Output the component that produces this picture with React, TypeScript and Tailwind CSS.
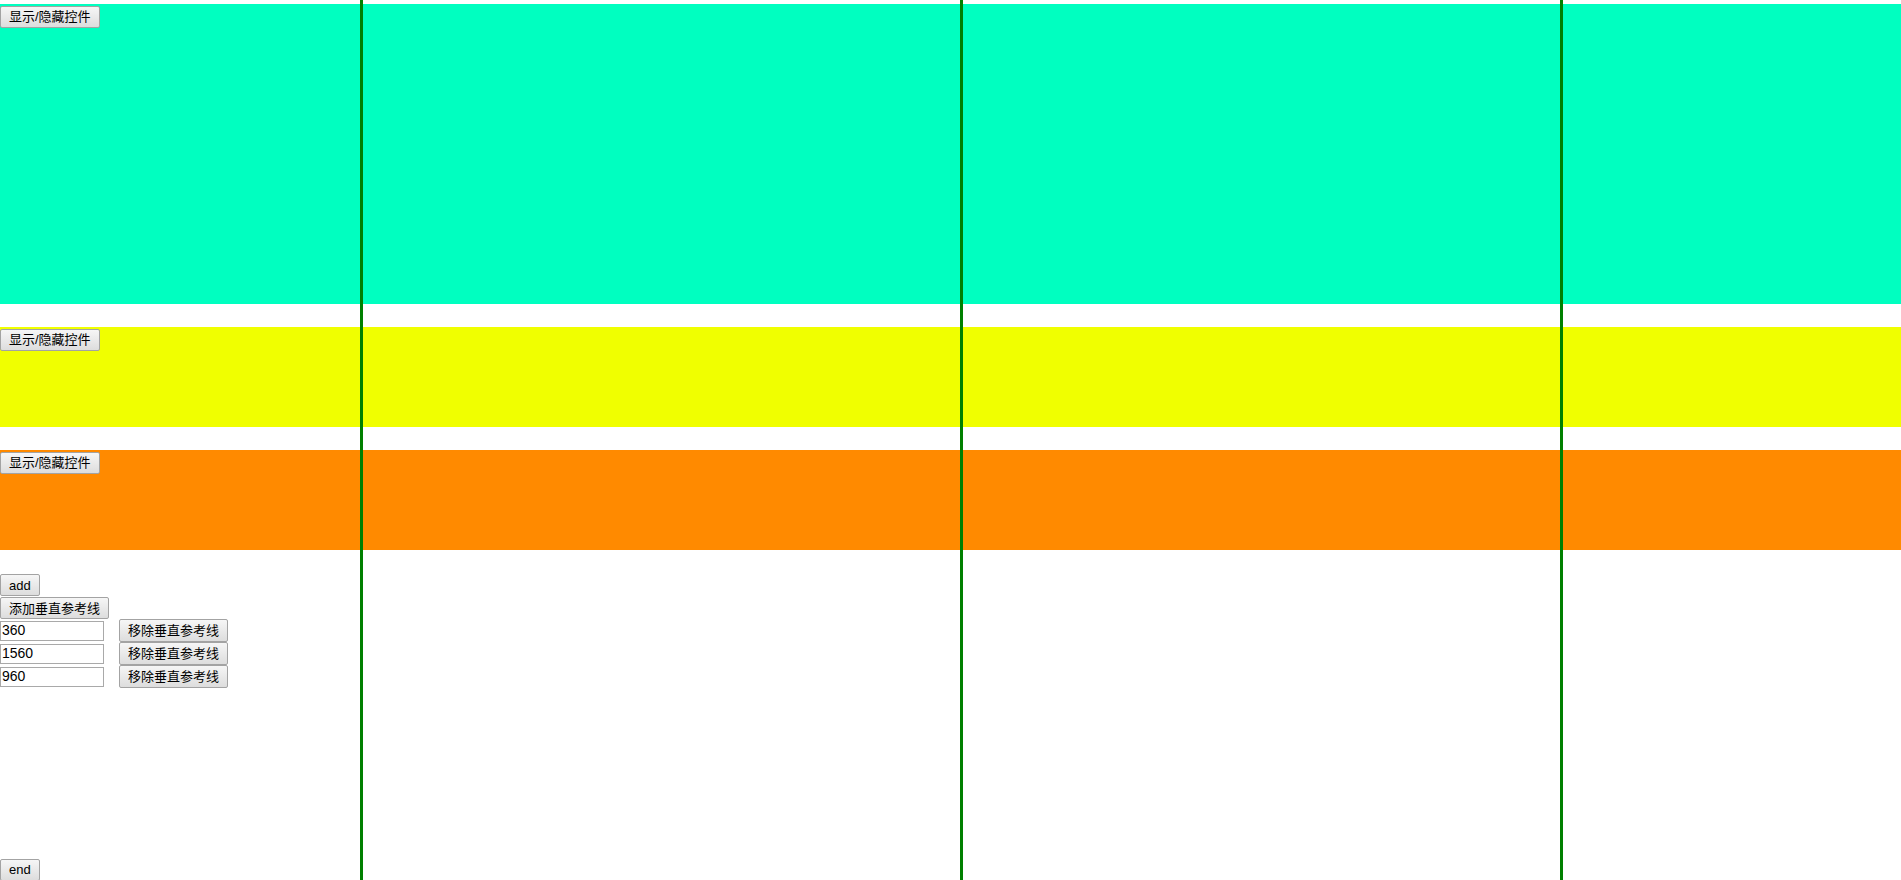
import React from "react";

const GUIDES = [360, 1560, 960];

const BTN =
  "h-[22px] rounded-[2px] border border-[#a3a3a3] bg-gradient-to-b from-[#f6f6f6] to-[#dddddd] px-[8px] text-[13px] leading-none text-black";

function Panel({ color, height }: { color: string; height: string }) {
  return (
    <div className={`${color} ${height} w-full`}>
      <button className={BTN}>显示/隐藏控件</button>
    </div>
  );
}

export default function App() {
  return (
    <div className="relative h-[880px] overflow-hidden bg-white pt-[4px] font-['Liberation_Sans','Noto_Sans_CJK_SC',sans-serif]">
      <Panel color="bg-[#00ffc0]" height="h-[300px]" />
      <div className="mt-[23px]">
        <Panel color="bg-[#f0ff00]" height="h-[100px]" />
      </div>
      <div className="mt-[23px]">
        <Panel color="bg-[#ff8a00]" height="h-[100px]" />
      </div>

      <div className="mt-[24px] flex flex-col items-start">
        <button className={`${BTN} mb-[1px] h-[21px]`}>add</button>
        <button className={BTN}>添加垂直参考线</button>
        {GUIDES.map((x) => (
          <div key={x} className="flex h-[23px] items-center gap-[15px]">
            <input
              defaultValue={String(x)}
              className="h-[20px] w-[104px] border border-[#a9a9a9] px-[1px] text-[14px] text-black outline-none"
            />
            <button className={`${BTN} h-[23px]`}>移除垂直参考线</button>
          </div>
        ))}
      </div>

      <div className="mt-[169px]">
        <button className={`${BTN} h-[21px]`}>end</button>
      </div>

      {GUIDES.map((x) => (
        <div
          key={x}
          className="pointer-events-none absolute top-0 bottom-0 w-[3px] bg-[#008000]"
          style={{ left: x }}
        />
      ))}
    </div>
  );
}
